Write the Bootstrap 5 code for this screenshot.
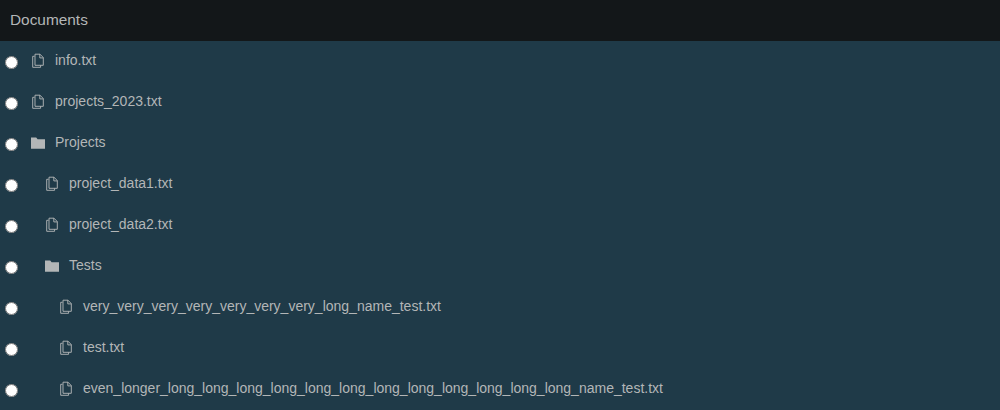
<!DOCTYPE html>
<html lang="en">
<head>
<meta charset="utf-8">
<meta name="viewport" content="width=device-width, initial-scale=1">
<title>Documents</title>
<link href="https://cdn.jsdelivr.net/npm/bootstrap@5.3.0/dist/css/bootstrap.min.css" rel="stylesheet">
<style>
  body { background: #1f3a48; color: #b3b6b7; font: 14px/21px "Liberation Sans", Arial, sans-serif; }
  .tree-head { height: 41px; background: #131719; font-size: 15.4px; padding: 0 10px 2px; }
  .tree-row { height: 41px; padding-left: 5px; }
  .tree-row input { width: 13px; height: 13px; margin: 2px 0 0; }
  .tree-row svg { width: 14px; height: 16px; margin: 0 0 1px 13px; }
  .tree-row label { margin: 0 0 3px 10px; }
  .tree-row.depth-1 svg { margin-left: 27px; }
  .tree-row.depth-2 svg { margin-left: 41px; }
</style>
</head>
<body class="overflow-hidden">
<svg class="d-none">
  <symbol id="file" viewBox="0 0 14 16">
    <path d="M3.5 3.3H1.7v11h7.9v-2M4 1.2h5L12.3 4.6v7.7H4zM8.8 1.2v3.7h3.5" fill="none" stroke="currentColor" stroke-opacity=".92"/>
  </symbol>
  <symbol id="folder" viewBox="0 0 14 16">
    <path d="M0 2.5h5.2L6.6 4.3H14v9.5H0z" fill="currentColor"/>
  </symbol>
</svg>
<header class="tree-head d-flex align-items-center">Documents</header>
<main>
  <div class="tree-row d-flex align-items-center"><input type="radio" name="f" id="f1"><svg><use href="#file"/></svg><label for="f1">info.txt</label></div>
  <div class="tree-row d-flex align-items-center"><input type="radio" name="f" id="f2"><svg><use href="#file"/></svg><label for="f2">projects_2023.txt</label></div>
  <div class="tree-row d-flex align-items-center"><input type="radio" name="f" id="f3"><svg><use href="#folder"/></svg><label for="f3">Projects</label></div>
  <div class="tree-row depth-1 d-flex align-items-center"><input type="radio" name="f" id="f4"><svg><use href="#file"/></svg><label for="f4">project_data1.txt</label></div>
  <div class="tree-row depth-1 d-flex align-items-center"><input type="radio" name="f" id="f5"><svg><use href="#file"/></svg><label for="f5">project_data2.txt</label></div>
  <div class="tree-row depth-1 d-flex align-items-center"><input type="radio" name="f" id="f6"><svg><use href="#folder"/></svg><label for="f6">Tests</label></div>
  <div class="tree-row depth-2 d-flex align-items-center"><input type="radio" name="f" id="f7"><svg><use href="#file"/></svg><label for="f7">very_very_very_very_very_very_very_long_name_test.txt</label></div>
  <div class="tree-row depth-2 d-flex align-items-center"><input type="radio" name="f" id="f8"><svg><use href="#file"/></svg><label for="f8">test.txt</label></div>
  <div class="tree-row depth-2 d-flex align-items-center"><input type="radio" name="f" id="f9"><svg><use href="#file"/></svg><label for="f9">even_longer_long_long_long_long_long_long_long_long_long_long_long_long_name_test.txt</label></div>
</main>
</body>
</html>
